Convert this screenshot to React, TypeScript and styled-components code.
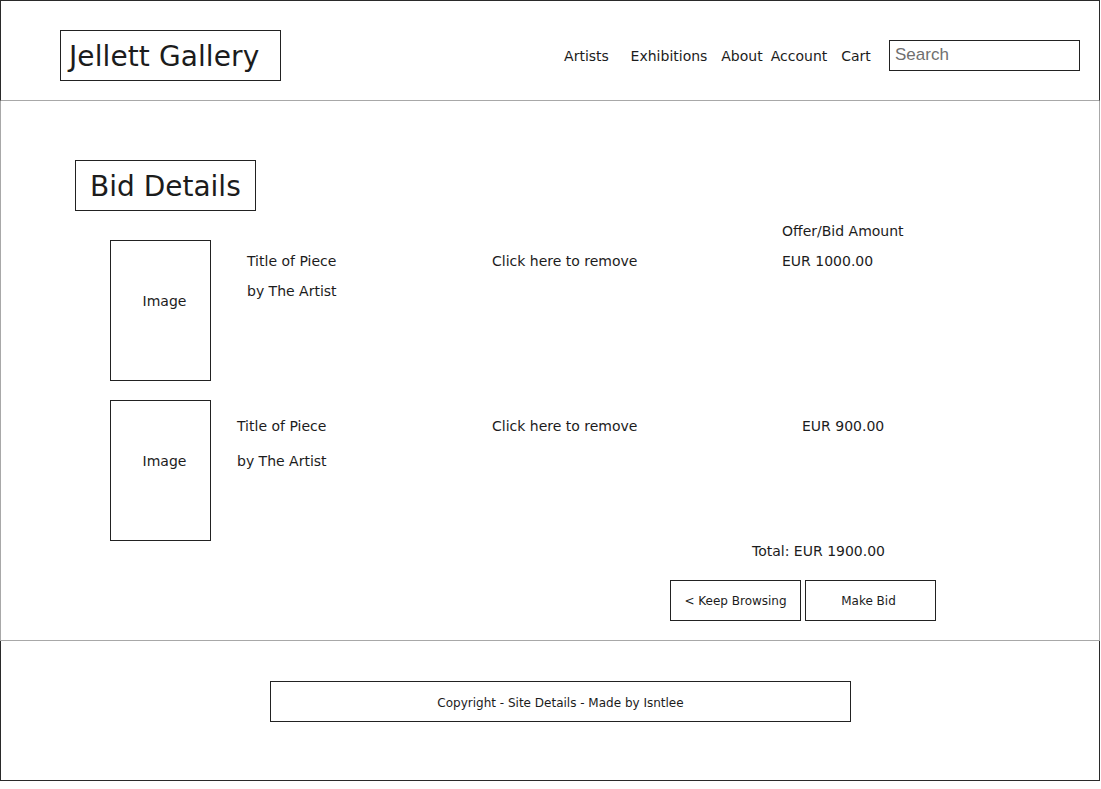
import React from "react";
import styled, { createGlobalStyle } from "styled-components";

const GlobalStyle = createGlobalStyle`
  body {
    margin: 0;
    background: #fff;
    font-family: "DejaVu Sans", Verdana, sans-serif;
    color: #1c1c1c;
  }
`;

const navItems = [
  { label: "Artists", w: 67 },
  { label: "Exhibitions", w: 98 },
  { label: "About", w: 48 },
  { label: "Account", w: 66 },
  { label: "Cart", w: 48 },
];

const bids = [
  { title: "Title of Piece", artist: "by The Artist", amount: "EUR 1000.00", indent: 36, amountIndent: 0, lead: 30, top: 6 },
  { title: "Title of Piece", artist: "by The Artist", amount: "EUR 900.00", indent: 26, amountIndent: 20, lead: 35, top: 9 },
];

const App: React.FC = () => {
  return (
    <>
      <GlobalStyle />
      <Frame>
        <Header>
          <Logo>Jellett Gallery</Logo>
          <Nav>
            {navItems.map((item) => (
              <NavItem key={item.label} $w={item.w}>
                {item.label}
              </NavItem>
            ))}
            <SearchBox placeholder="Search" />
          </Nav>
        </Header>

        <Main>
          <PageTitle>Bid Details</PageTitle>
          <BidTable>
            <ColumnHead>
              <span />
              <span />
              <span />
              <span>Offer/Bid Amount</span>
            </ColumnHead>
            {bids.map((bid, i) => (
              <BidRow key={i} $lead={bid.lead} $top={bid.top}>
                <ImageBox>Image</ImageBox>
                <PieceInfo $indent={bid.indent}>
                  <div>{bid.title}</div>
                  <div>{bid.artist}</div>
                </PieceInfo>
                <RemoveLink>Click here to remove</RemoveLink>
                <Amount $indent={bid.amountIndent}>{bid.amount}</Amount>
              </BidRow>
            ))}
          </BidTable>
          <Total>Total: EUR 1900.00</Total>
          <Actions>
            <SketchButton $size={12}>&lt; Keep Browsing</SketchButton>
            <SketchButton $size={12} $nudge={4}>Make Bid</SketchButton>
          </Actions>
        </Main>

        <Footer>
          <Copyright>Copyright - Site Details - Made by Isntlee</Copyright>
        </Footer>
      </Frame>
    </>
  );
};

export default App;

const Frame = styled.div`
  width: 1100px;
  display: flex;
  flex-direction: column;
`;

const Header = styled.header`
  box-sizing: border-box;
  height: 101px;
  padding: 9px 19px 0 59px;
  display: flex;
  align-items: center;
  justify-content: space-between;
  border: 1px solid #2a2a2a;
  border-bottom-color: #a8a8a8;
`;

const Logo = styled.h1`
  box-sizing: border-box;
  width: 221px;
  height: 51px;
  margin: 0;
  padding: 2px 0 0 8px;
  display: flex;
  align-items: center;
  border: 1px solid #222;
  font-size: 28px;
  font-weight: 400;
  letter-spacing: 0.1px;
`;

const Nav = styled.nav`
  display: flex;
  align-items: center;
`;

const NavItem = styled.a<{ $w: number }>`
  width: ${(p) => p.$w}px;
  padding-top: 2px;
  text-align: center;
  font-size: 14px;
  color: #1c1c1c;
  cursor: pointer;
`;

const SearchBox = styled.input`
  box-sizing: border-box;
  width: 191px;
  height: 31px;
  margin-left: 9px;
  padding: 0 5px;
  border: 1px solid #222;
  outline: none;
  font-family: "Liberation Sans", Arial, sans-serif;
  font-size: 17px;

  &::placeholder {
    color: #6f6f6f;
  }
`;

const Main = styled.main`
  box-sizing: border-box;
  height: 540px;
  padding: 59px 0 0 74px;
  border: 1px solid #a8a8a8;
  border-top: none;
`;

const PageTitle = styled.h2`
  box-sizing: border-box;
  width: 181px;
  height: 51px;
  margin: 0;
  padding: 2px 0 0 14px;
  display: flex;
  align-items: center;
  border: 1px solid #222;
  font-size: 28px;
  font-weight: 400;
`;

const BidTable = styled.div`
  margin: 11px 0 0 35px;
  display: flex;
  flex-direction: column;
  gap: 19px;
`;

const gridCols = `101px 281px 290px 1fr`;

const ColumnHead = styled.div`
  display: grid;
  grid-template-columns: ${gridCols};
  height: 18px;
  margin-bottom: -19px;
  font-size: 14px;
  line-height: 18px;
`;

const BidRow = styled.div<{ $lead: number; $top: number }>`
  display: grid;
  grid-template-columns: ${gridCols};
  align-items: start;
  font-size: 14px;
  line-height: ${(p) => p.$lead}px;

  & > *:not(:first-child) {
    padding-top: ${(p) => p.$top}px;
  }
`;

const ImageBox = styled.div`
  box-sizing: border-box;
  height: 141px;
  padding: 52px 0 0 8px;
  border: 1px solid #222;
  text-align: center;
  font-size: 14px;
  line-height: 16px;
`;

const PieceInfo = styled.div<{ $indent: number }>`
  padding-left: ${(p) => p.$indent}px;
`;

const RemoveLink = styled.a`
  cursor: pointer;
`;

const Amount = styled.div<{ $indent: number }>`
  padding-left: ${(p) => p.$indent}px;
`;

const Total = styled.div`
  margin: 2px 0 0 677px;
  font-size: 14px;
  line-height: 16px;
`;

const Actions = styled.div`
  margin: 21px 0 0 595px;
  display: flex;
  gap: 4px;
`;

const SketchButton = styled.button<{ $size: number; $nudge?: number }>`
  box-sizing: border-box;
  width: 131px;
  height: 41px;
  padding: 0 ${(p) => p.$nudge ?? 0}px 0 0;
  background: #fff;
  border: 1px solid #222;
  font-family: "DejaVu Sans", Verdana, sans-serif;
  font-size: ${(p) => p.$size}px;
  color: #1c1c1c;
  cursor: pointer;
`;

const Footer = styled.footer`
  box-sizing: border-box;
  height: 140px;
  padding: 40px 0 0 269px;
  border: 1px solid #2a2a2a;
  border-top: none;
`;

const Copyright = styled.div`
  box-sizing: border-box;
  width: 581px;
  height: 41px;
  padding-top: 2px;
  display: flex;
  align-items: center;
  justify-content: center;
  border: 1px solid #222;
  font-size: 12px;
`;
